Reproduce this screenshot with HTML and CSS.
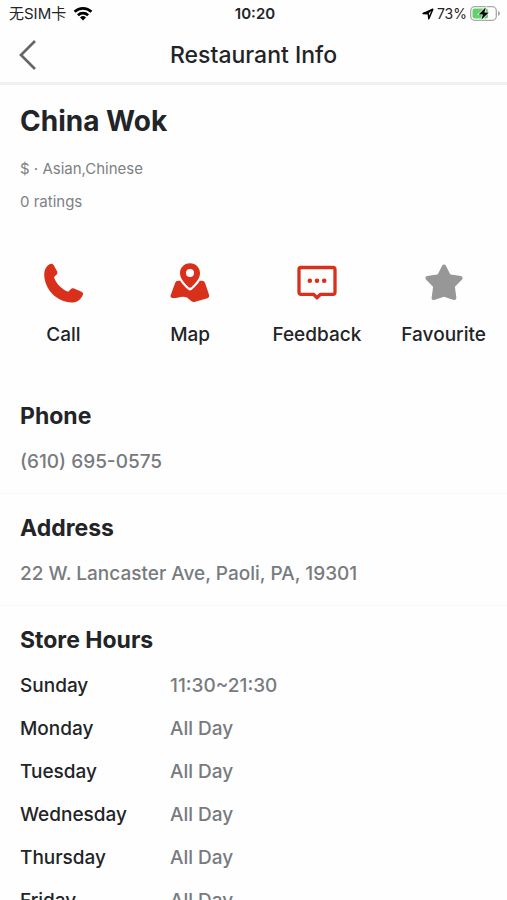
FILE: index.html
```html
<!DOCTYPE html>
<html lang="en">
<head>
  <meta charset="utf-8">
  <meta name="viewport" content="width=device-width, initial-scale=1">
  <title>Restaurant Info</title>
  <link rel="stylesheet" href="styles.css">
</head>
<body>
  <div class="app">
    <div class="status">
      <div class="status-left">
        <span>无SIM卡</span>
        <svg class="wifi" viewBox="0 0 20 15" aria-hidden="true">
          <g fill="none" stroke="#000" stroke-width="2.7">
            <path d="M1.600 5.800a12 12 0 0 1 16.800 0"/>
            <path d="M4.900 9.300a7.300 7.300 0 0 1 10.200 0"/>
          </g>
          <path d="M10 14.500l-3-3.100a4.300 4.300 0 0 1 6 0z"/>
        </svg>
      </div>
      <span class="clock">10:20</span>
      <div class="status-right">
        <svg class="locate" viewBox="0 0 12 12" aria-hidden="true">
          <path d="M1 5.600L10.800 1.200L6.800 10.800L6.300 5.700z" fill="none" stroke="#000" stroke-width="1.500" stroke-linejoin="round"/>
          <path d="M1 5.600L10.800 1.200L6.300 5.700z"/>
        </svg>
        <span>73%</span>
        <svg class="battery" viewBox="0 0 31 15" aria-hidden="true">
          <rect x=".7" y=".7" width="25.6" height="13.6" rx="4" fill="#fff" stroke="#a8a8a8" stroke-width="1.300"/>
          <rect x="2.5" y="2.5" width="15.5" height="10" rx="2" fill="#62d26b"/>
          <path d="M28 5v5q2-.8 2-2.500T28 5z" fill="#a8a8a8"/>
          <path d="M15.800 1.200L8.600 8.400h4.300l-1.600 5.400 7.500-7.400h-4.400z" stroke="#fff" stroke-width="1.200" paint-order="stroke"/>
        </svg>
      </div>
    </div>

    <header class="nav">
      <button class="back" type="button" aria-label="Back">
        <svg viewBox="0 0 20 32" aria-hidden="true">
          <path d="M17 2L3 16l14 14" fill="none" stroke="#666" stroke-width="2.7"/>
        </svg>
      </button>
      <h1 class="nav-title">Restaurant Info</h1>
    </header>

    <main class="content">
      <section class="intro">
        <h2 class="name">China Wok</h2>
        <p class="meta">$ · Asian,Chinese</p>
        <p class="meta">0 ratings</p>
      </section>

      <div class="actions">
        <button class="action" type="button">
          <svg viewBox="0 0 40 40" aria-hidden="true">
            <path fill="#d9301c" d="M6.500 1.200C8.300.2 9.800.5 10.800 2.200L14 8.300C14.700 9.800 14.400 11 13.200 12L11 14C12.600 20 18.500 26.300 25.200 28.800L27.700 26.200C28.700 25.100 29.700 25 31 25.500L38.500 28.800C40 29.500 40.400 30.800 39.700 32.200C37.200 37 33.800 39.500 29 39.500C13.500 39.500 1.200 25.800 1.200 11.300C1.200 7 3 3.200 6.500 1.200Z"/>
          </svg>
          <span>Call</span>
        </button>
        <button class="action" type="button">
          <svg viewBox="0 0 40 40" aria-hidden="true">
            <path fill="#d9301c" fill-rule="evenodd" d="M20 .3C14 .3 10 4.800 10 10.200C10 15.500 14.800 20.500 18.300 23.900Q20 25.500 21.700 23.900C25.200 20.500 30 15.500 30 10.200C30 4.800 26 .3 20 .3ZM20 6.100a4 4 0 1 1 0 8a4 4 0 1 1 0-8Z"/>
            <path fill="#d9301c" d="M10.200 17.800H8.300Q5.800 17.800 5 20.200L.6 32.500Q.2 34.800 2.500 35C8.500 35.300 11.500 32.200 17 34.600L21.500 38.300Q23 39.500 25.200 38.800L37.500 35.300Q39.800 34.500 39.200 32.300L35.100 20.100Q34.400 17.800 32 17.800H29.800C27.800 21 24.800 24.200 21.700 26.800Q20 28.100 18.300 26.800C15.200 24.200 12.200 21 10.200 17.800Z"/>
          </svg>
          <span>Map</span>
        </button>
        <button class="action" type="button">
          <svg viewBox="0 0 40 40" aria-hidden="true">
            <path fill="none" stroke="#d9301c" stroke-width="3.300" stroke-linejoin="round" d="M4 4.500H36Q38 4.500 38 6.500V29.300Q38 31.300 36 31.300H23.500L20 34.700L16.500 31.300H4Q2 31.300 2 29.300V6.500Q2 4.500 4 4.500Z"/>
            <g fill="#d9301c"><circle cx="12.800" cy="17.700" r="2.300"/><circle cx="20" cy="17.700" r="2.300"/><circle cx="27.200" cy="17.700" r="2.300"/></g>
          </svg>
          <span>Feedback</span>
        </button>
        <button class="action" type="button">
          <svg viewBox="0 0 40 40" aria-hidden="true">
            <path fill="#979797" stroke="#979797" stroke-width="4" stroke-linejoin="round" d="M20 3.500L24.900 13.200L36.600 15L28.800 23.200L30.400 35L20 31.500L9.600 35L11.200 23.200L3.400 15L15.100 13.200Z"/>
          </svg>
          <span>Favourite</span>
        </button>
      </div>

      <section class="block">
        <h3 class="heading">Phone</h3>
        <p class="value">(610) 695-0575</p>
      </section>
      <section class="block">
        <h3 class="heading">Address</h3>
        <p class="value">22 W. Lancaster Ave, Paoli, PA, 19301</p>
      </section>
      <section class="block">
        <h3 class="heading" id="hours">Store Hours</h3>
        <table class="hours" aria-labelledby="hours">
          <tbody>
            <tr><th scope="row">Sunday</th><td>11:30~21:30</td></tr>
            <tr><th scope="row">Monday</th><td>All Day</td></tr>
            <tr><th scope="row">Tuesday</th><td>All Day</td></tr>
            <tr><th scope="row">Wednesday</th><td>All Day</td></tr>
            <tr><th scope="row">Thursday</th><td>All Day</td></tr>
            <tr><th scope="row">Friday</th><td>All Day</td></tr>
          </tbody>
        </table>
      </section>
    </main>
  </div>
</body>
</html>
```

FILE: styles.css
```css
* {
  box-sizing: border-box;
}

body,
h1,
h2,
h3,
p {
  margin: 0;
}

body {
  background: #fefefe;
  color: #222426;
  font-family: Inter, "Noto Sans CJK SC", sans-serif;
}

button {
  padding: 0;
  border: 0;
  background: none;
  color: inherit;
  font: inherit;
}

svg {
  display: block;
}

.app {
  display: flex;
  flex-direction: column;
  height: 100vh;
}

.status {
  display: grid;
  grid-template-columns: 1fr auto 1fr;
  align-items: center;
  flex: none;
  height: 27px;
  padding: 0 6px 0 9px;
  font-size: 14px;
  line-height: 20px;
}

.status-left,
.status-right {
  display: flex;
  align-items: center;
}

.status-left {
  gap: 7px;
  font-size: 15px;
}

.status-right {
  justify-content: flex-end;
  gap: 3px;
}

.clock {
  font-size: 15px;
  font-weight: 600;
}

.wifi {
  width: 20px;
  height: 15px;
}

.locate {
  width: 12px;
  height: 12px;
}

.battery {
  width: 31px;
  height: 15px;
}

.nav {
  display: grid;
  grid-template-columns: 60px 1fr 60px;
  align-items: center;
  flex: none;
  height: 58px;
  border-bottom: 3px solid #f0f0f0;
}

.back {
  justify-self: start;
  padding: 0 18px;
}

.back svg {
  width: 20px;
  height: 32px;
}

.nav-title {
  font-size: 23px;
  font-weight: 500;
  line-height: 32px;
  text-align: center;
}

.content {
  flex: 1;
  min-height: 0;
  overflow-y: auto;
  scrollbar-width: none;
}

.intro {
  padding: 16px 20px 0;
}

.name {
  margin-bottom: 11px;
  font-size: 28px;
  font-weight: 700;
  line-height: 40px;
}

.meta {
  color: #7d8184;
  font-size: 15px;
  line-height: 33px;
}

.actions {
  display: grid;
  grid-template-columns: repeat(4, 1fr);
  padding: 45px 0 33px;
}

.action {
  display: flex;
  flex-direction: column;
  align-items: center;
  gap: 18px;
  font-size: 19px;
  font-weight: 500;
  line-height: 28px;
}

.action svg {
  width: 40px;
  height: 40px;
}

.block {
  padding: 18px 20px 10px;
  border-bottom: 1px solid #f8f8f8;
}

.heading {
  margin-bottom: 8px;
  font-size: 23px;
  font-weight: 700;
  line-height: 32px;
}

.value {
  color: #777b7e;
  font-size: 19px;
  font-weight: 500;
  line-height: 43px;
}

.hours {
  width: 100%;
  border-collapse: collapse;
  font-size: 19px;
  font-weight: 500;
  line-height: 43px;
}

.hours th,
.hours td {
  padding: 0;
  text-align: left;
}

.hours th {
  width: 150px;
  font-weight: 500;
}

.hours td {
  color: #777b7e;
}
```
